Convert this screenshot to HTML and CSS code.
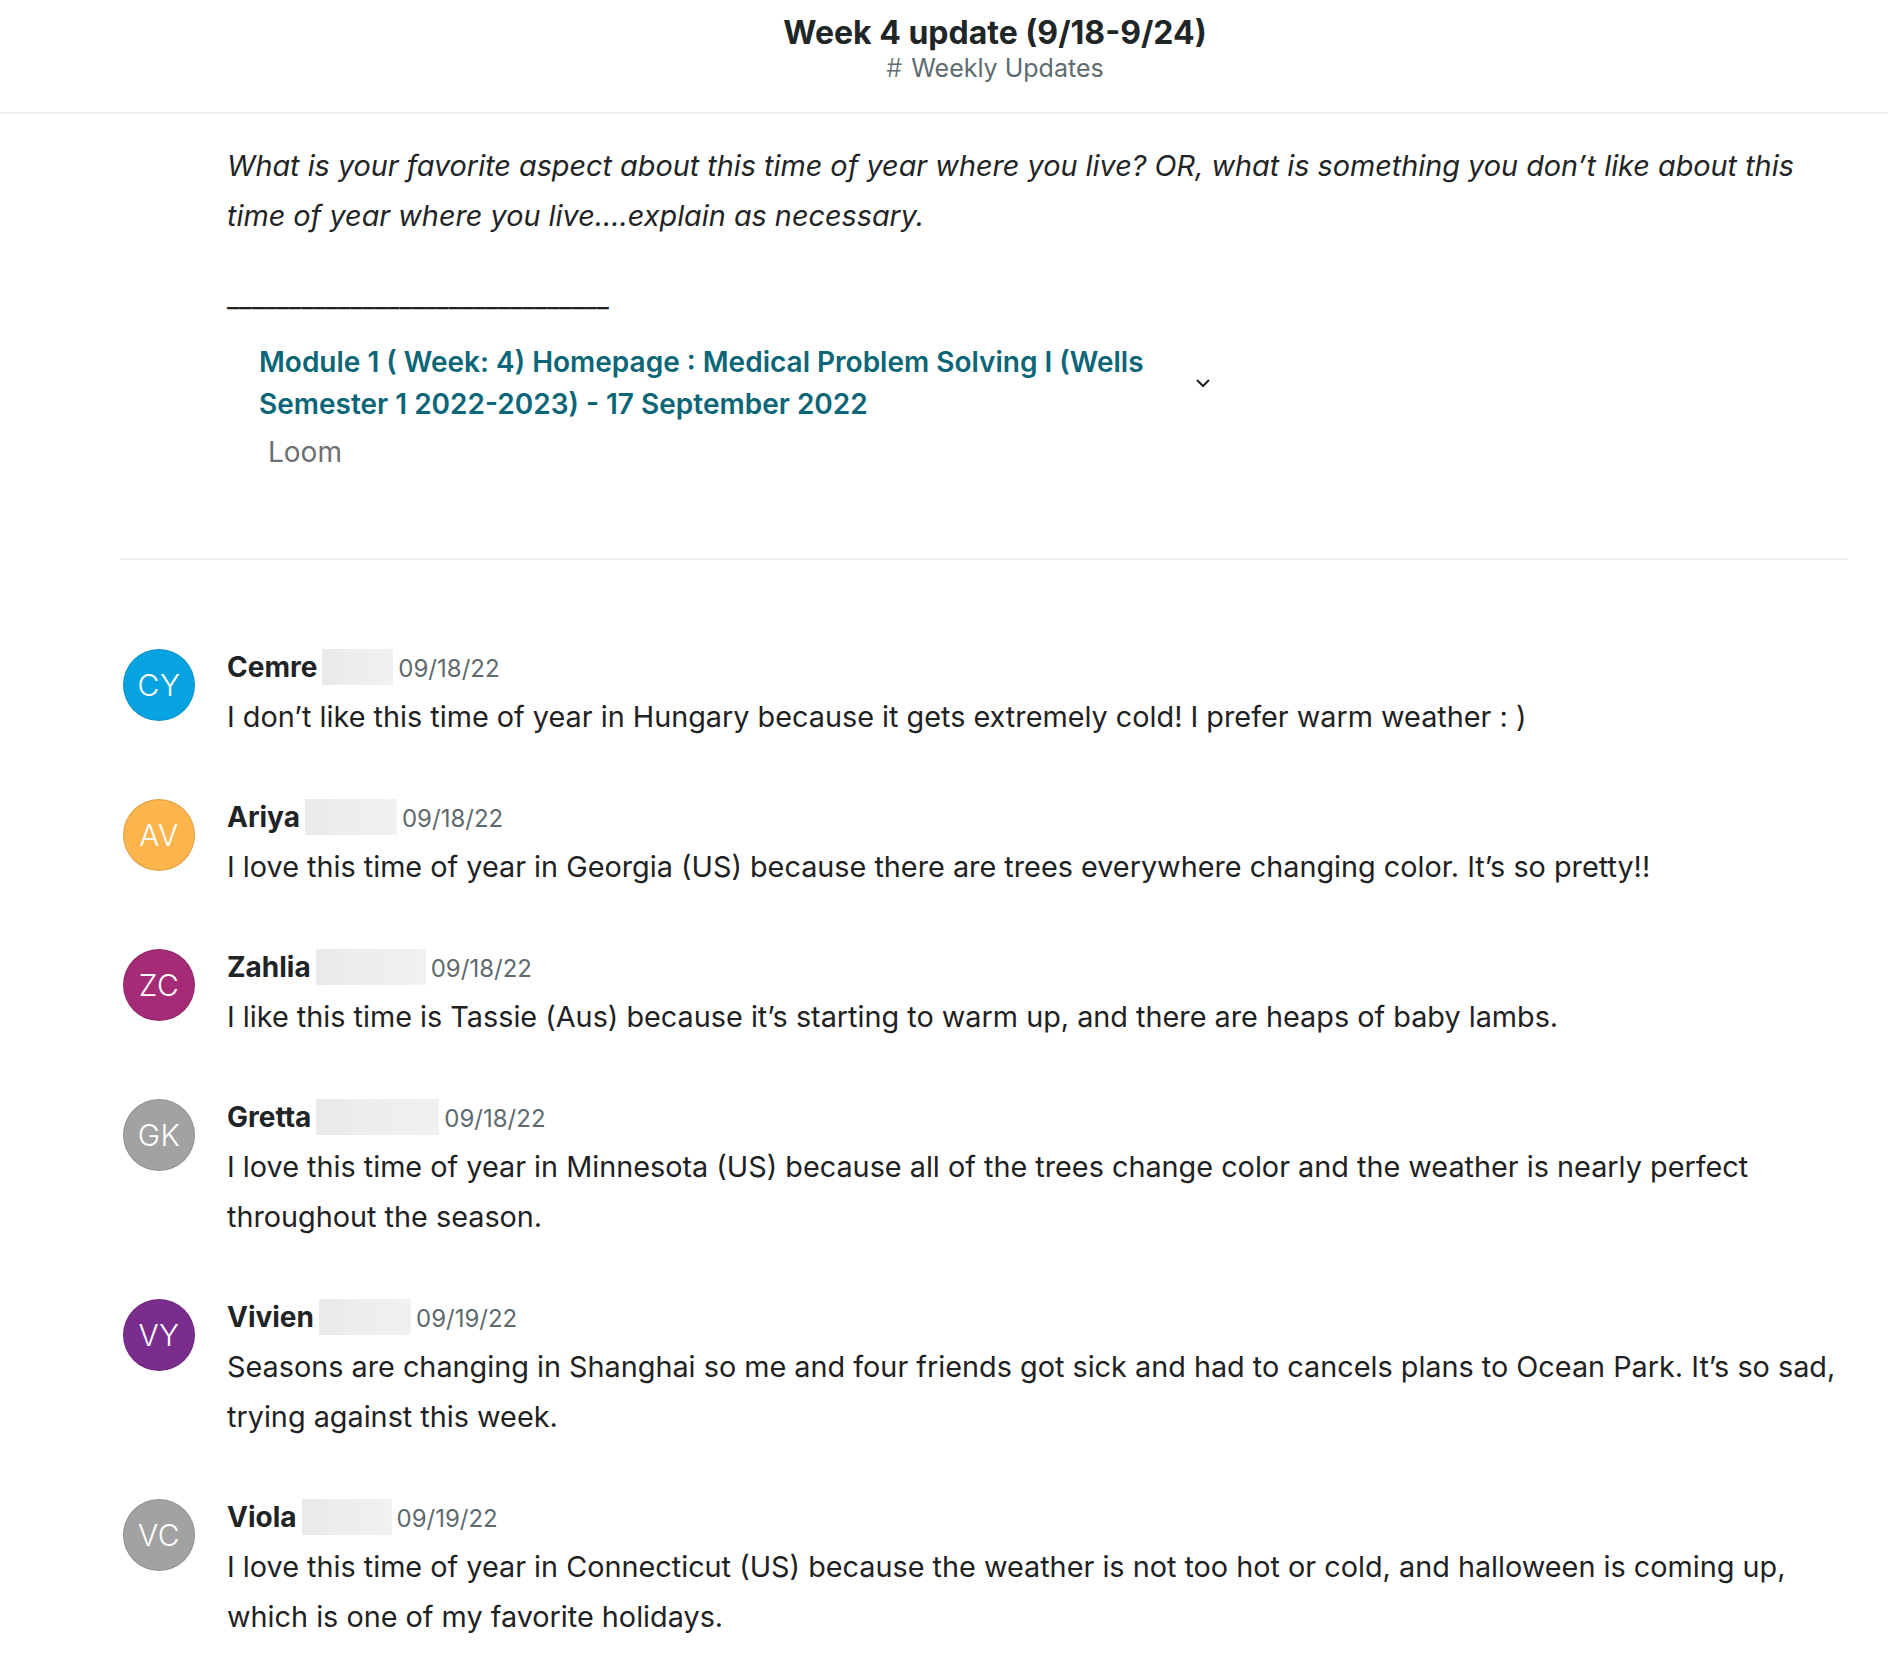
FILE: index.html
```html
<!DOCTYPE html>
<html lang="en">
<head>
<meta charset="utf-8">
<title>Week 4 update (9/18-9/24)</title>
<link rel="stylesheet" href="styles.css">
</head>
<body>
<header class="topbar">
  <h1 class="title">Week 4 update (9/18-9/24)</h1>
  <div class="channel"><span class="hash">#</span> Weekly Updates</div>
</header>
<main class="content">
  <section class="post">
    <p class="question">What is your favorite aspect about this time of year where you live? OR, what is something you don’t like about this time of year where you live….explain as necessary.</p>
    <p class="rule">_______________________________</p>
    <div class="embed">
      <div class="embed-text">
        <a class="embed-link" href="#">Module 1 ( Week: 4) Homepage : Medical Problem Solving I (Wells Semester 1 2022-2023) - 17 September 2022</a>
        <div class="embed-source">Loom</div>
      </div>
      <svg class="chevron" width="16" height="10" viewBox="0 0 16 10"><path d="M2 2 L8 8 L14 2" fill="none" stroke="#222" stroke-width="2"/></svg>
    </div>
  </section>
  <hr class="divider">
  <ul class="replies">
    <li class="reply">
      <div class="avatar av-blue">CY</div>
      <div class="reply-body">
        <div class="reply-head"><span class="name">Cemre</span><span class="redact w1"></span><span class="date">09/18/22</span></div>
        <p class="reply-text">I don’t like this time of year in Hungary because it gets extremely cold! I prefer warm weather : )</p>
      </div>
    </li>
    <li class="reply">
      <div class="avatar av-orange">AV</div>
      <div class="reply-body">
        <div class="reply-head"><span class="name">Ariya</span><span class="redact w2"></span><span class="date">09/18/22</span></div>
        <p class="reply-text">I love this time of year in Georgia (US) because there are trees everywhere changing color. It’s so pretty!!</p>
      </div>
    </li>
    <li class="reply">
      <div class="avatar av-magenta">ZC</div>
      <div class="reply-body">
        <div class="reply-head"><span class="name">Zahlia</span><span class="redact w3"></span><span class="date">09/18/22</span></div>
        <p class="reply-text">I like this time is Tassie (Aus) because it’s starting to warm up, and there are heaps of baby lambs.</p>
      </div>
    </li>
    <li class="reply">
      <div class="avatar av-grey">GK</div>
      <div class="reply-body">
        <div class="reply-head"><span class="name">Gretta</span><span class="redact w4"></span><span class="date">09/18/22</span></div>
        <p class="reply-text">I love this time of year in Minnesota (US) because all of the trees change color and the weather is nearly perfect throughout the season.</p>
      </div>
    </li>
    <li class="reply">
      <div class="avatar av-purple">VY</div>
      <div class="reply-body">
        <div class="reply-head"><span class="name">Vivien</span><span class="redact w5"></span><span class="date">09/19/22</span></div>
        <p class="reply-text">Seasons are changing in Shanghai so me and four friends got sick and had to cancels plans to Ocean Park. It’s so sad, trying against this week.</p>
      </div>
    </li>
    <li class="reply">
      <div class="avatar av-grey">VC</div>
      <div class="reply-body">
        <div class="reply-head"><span class="name">Viola</span><span class="redact w6"></span><span class="date">09/19/22</span></div>
        <p class="reply-text">I love this time of year in Connecticut (US) because the weather is not too hot or cold, and halloween is coming up, which is one of my favorite holidays.</p>
      </div>
    </li>
  </ul>
</main>
</body>
</html>
```
FILE: styles.css
```css
* { box-sizing: border-box; }
html, body { margin: 0; padding: 0; background: #fff; }
body {
  font-family: Inter, "Noto Sans", "Liberation Sans", sans-serif;
  color: #1f2223;
}
.topbar {
  height: 114px;
  padding: 12px 0 0 102px;
  border-bottom: 2px solid #e9edf0;
  text-align: center;
}
.title {
  margin: 0;
  font-size: 32px;
  line-height: 42px;
  font-weight: 700;
  color: #1f2627;
}
.channel {
  font-size: 25px;
  line-height: 28px;
  color: #5e6b70;
}
.hash { font-weight: 300; margin-right: 2px; }
.content { padding: 0 40px 0 120px; }
.post { padding: 27px 0 0 107px; }
.question {
  margin: 0;
  font-style: italic;
  font-size: 28.8px;
  line-height: 50px;
  color: #222426;
}
.rule {
  margin: 32px 0 0;
  font-size: 27px;
  line-height: 50px;
  color: #222;
}
.embed {
  display: flex;
  align-items: flex-start;
  width: 990px;
  padding: 18px 0 0 32px;
}
.embed-text { width: 900px; }
.embed-link {
  display: block;
  font-size: 28px;
  line-height: 42px;
  font-weight: 600;
  color: #0b6677;
  text-decoration: none;
}
.embed-source {
  margin-top: 9px;
  padding-left: 9px;
  font-size: 28px;
  line-height: 36px;
  color: #6b6f72;
}
.chevron { margin: 37px 0 0 36px; }
.divider {
  margin: 88px 0 0;
  border: 0;
  border-top: 2px solid #e9edf0;
}
.replies { list-style: none; margin: 0; padding: 82px 0 0; }
.reply {
  display: flex;
  align-items: flex-start;
  gap: 32px;
  margin-bottom: 50px;
}
.avatar {
  flex: none;
  width: 72px;
  height: 72px;
  margin: 7px 0 0 3px;
  border-radius: 50%;
  border: 1px solid rgba(0,0,0,0.12);
  display: flex;
  align-items: center;
  justify-content: center;
  color: #fff;
  font-size: 30px;
  font-weight: 300;
  letter-spacing: 0.5px;
}
.av-blue { background: #07a3e0; }
.av-orange { background: #fbb54c; }
.av-magenta { background: #a62b76; }
.av-grey { background: #a2a2a2; }
.av-purple { background: #7a2d8c; }
.reply-body { flex: 1; }
.reply-head {
  display: flex;
  align-items: center;
  height: 50px;
}
.name { font-size: 28px; font-weight: 700; color: #1f2426; }
.redact {
  height: 36px;
  margin: 0 5px 0 5px;
  background: linear-gradient(90deg, #e9eaea, #f1f1f1);
}
.w1 { width: 71px; }
.w2 { width: 92px; }
.w3 { width: 110px; }
.w4 { width: 123px; }
.w5 { width: 92px; }
.w6 { width: 90px; }
.date { font-size: 24px; color: #5f6a6e; padding-top: 3px; }
.reply-text {
  margin: 0;
  font-size: 28.8px;
  line-height: 50px;
  color: #1f2223;
}
```
